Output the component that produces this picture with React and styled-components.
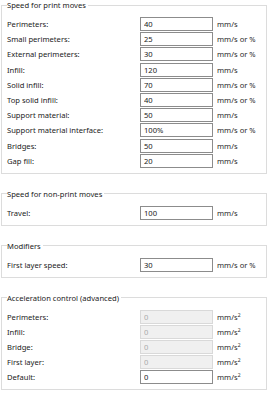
import React from 'react';
import styled, { createGlobalStyle } from 'styled-components';

const GlobalStyle = createGlobalStyle`
  html, body {
    margin: 0;
    padding: 0;
    background: #ffffff;
  }
  body {
    font-family: "Noto Sans", "Open Sans", sans-serif;
    font-size: 7.6px;
    color: #222222;
  }
`;

const Page = styled.div`
  width: 268px;
  height: 400px;
  overflow: hidden;
  padding: 0 1px 0 1px;
  box-sizing: border-box;
`;

const Group = styled.fieldset`
  margin: 0 0 15px 0;
  padding: 7px 5px 5px 5px;
  border: 1px solid #dcdcdc;
  min-width: 0;
`;

const Legend = styled.legend`
  padding: 0 2px 0 0;
  line-height: 10px;
  height: 10px;
  font-size: 7.6px;
  color: #222222;
`;

const Row = styled.div`
  display: flex;
  align-items: center;
  height: 14px;
  & + & {
    margin-top: 1.2px;
  }
`;

const Label = styled.span`
  width: 133px;
  flex: none;
  line-height: 14px;
  white-space: nowrap;
`;

const Field = styled.input`
  width: 73px;
  height: 14px;
  box-sizing: border-box;
  margin: 0;
  padding: 0 0 0 3px;
  border: 1px solid ${p => (p.$off ? '#d9d9d9' : '#8c8c8c')};
  background: ${p => (p.$off ? '#f0f0f0' : '#ffffff')};
  color: ${p => (p.$off ? '#ababab' : '#222222')};
  font-family: "Noto Sans", "Open Sans", sans-serif;
  font-size: 7.6px;
  line-height: 12px;
  outline: none;
  flex: none;
`;

const Unit = styled.span`
  margin-left: 4px;
  color: #2a2a2a;
  white-space: nowrap;
  sup {
    font-size: 5px;
    line-height: 0;
    vertical-align: 3px;
  }
`;

const groups = [
  {
    title: 'Speed for print moves',
    rows: [
      ['Perimeters:', '40', 'mm/s'],
      ['Small perimeters:', '25', 'mm/s or %'],
      ['External perimeters:', '30', 'mm/s or %'],
      ['Infill:', '120', 'mm/s'],
      ['Solid infill:', '70', 'mm/s or %'],
      ['Top solid infill:', '40', 'mm/s or %'],
      ['Support material:', '50', 'mm/s'],
      ['Support material interface:', '100%', 'mm/s or %'],
      ['Bridges:', '50', 'mm/s'],
      ['Gap fill:', '20', 'mm/s'],
    ],
  },
  {
    title: 'Speed for non-print moves',
    rows: [['Travel:', '100', 'mm/s']],
  },
  {
    title: 'Modifiers',
    rows: [['First layer speed:', '30', 'mm/s or %']],
  },
  {
    title: 'Acceleration control (advanced)',
    rows: [
      ['Perimeters:', '0', 'accel', true],
      ['Infill:', '0', 'accel', true],
      ['Bridge:', '0', 'accel', true],
      ['First layer:', '0', 'accel', true],
      ['Default:', '0', 'accel', false],
    ],
  },
];

export default function App() {
  return (
    <Page>
      <GlobalStyle />
      {groups.map((g) => (
        <Group key={g.title}>
          <Legend>{g.title}</Legend>
          {g.rows.map(([label, value, unit, off], i) => (
            <Row key={i}>
              <Label>{label}</Label>
              <Field readOnly value={value} $off={off} />
              <Unit>
                {unit === 'accel' ? (
                  <>mm/s<sup>2</sup></>
                ) : (
                  unit
                )}
              </Unit>
            </Row>
          ))}
        </Group>
      ))}
    </Page>
  );
}
